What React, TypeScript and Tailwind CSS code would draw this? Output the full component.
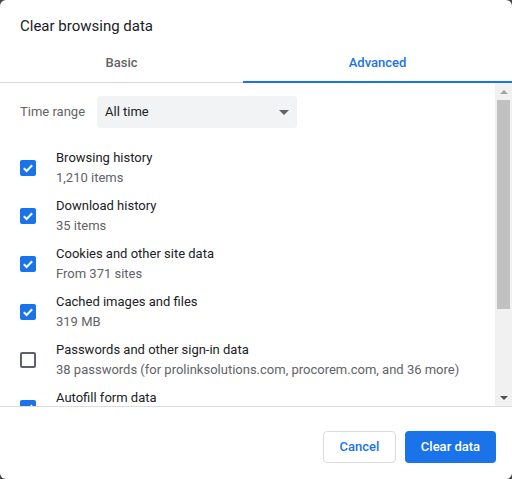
import React from 'react';

interface DataItem {
  title: string;
  detail?: string;
  checked: boolean;
}

const items: DataItem[] = [
  { title: 'Browsing history', detail: '1,210 items', checked: true },
  { title: 'Download history', detail: '35 items', checked: true },
  { title: 'Cookies and other site data', detail: 'From 371 sites', checked: true },
  { title: 'Cached images and files', detail: '319 MB', checked: true },
  {
    title: 'Passwords and other sign-in data',
    detail: '38 passwords (for prolinksolutions.com, procorem.com, and 36 more)',
    checked: false,
  },
  { title: 'Autofill form data', checked: true },
];

function Checkbox({ checked }: { checked: boolean }) {
  if (!checked) {
    return <div className="h-4 w-4 shrink-0 rounded-[2px] border-2 border-[#5f6368]" />;
  }
  return (
    <div className="flex h-4 w-4 shrink-0 items-center justify-center rounded-[2px] bg-[#1a73e8]">
      <svg viewBox="0 0 16 16" className="h-4 w-4">
        <path d="M3.8 8.2 L6.6 11 L12.2 5.2" fill="none" stroke="white" strokeWidth="2" />
      </svg>
    </div>
  );
}

function Scrollbar() {
  return (
    <div className="flex w-[17px] shrink-0 flex-col bg-[#f1f1f1]">
      <div className="flex h-[17px] items-center justify-center">
        <svg viewBox="0 0 8 4" className="h-[4px] w-[8px]">
          <path d="M0 4 L4 0 L8 4 Z" fill="#a3a3a3" />
        </svg>
      </div>
      <div className="mx-[2px] h-[209px] bg-[#c1c1c1]" />
      <div className="flex-1" />
      <div className="flex h-[17px] items-center justify-center">
        <svg viewBox="0 0 8 4" className="h-[4px] w-[8px]">
          <path d="M0 0 L8 0 L4 4 Z" fill="#505050" />
        </svg>
      </div>
    </div>
  );
}

export default function App() {
  return (
    <div className="h-[479px] w-[512px] bg-[#454545]" style={{ fontFamily: 'Roboto, "Liberation Sans", sans-serif' }}>
      <div className="flex h-full w-full flex-col overflow-hidden rounded-[6px] bg-white">
        {/* Title */}
        <div className="flex h-[52px] shrink-0 items-center px-5 pt-px text-[15px] text-[#202124]">
          Clear browsing data
        </div>

        {/* Tabs */}
        <div className="flex shrink-0 items-start border-b border-[#dadce0]">
          <div className="flex h-[30px] w-[243px] shrink-0 justify-center pt-px text-[13px] leading-[20px] font-medium text-[#5f6368]">
            Basic
          </div>
          <div className="mb-[-1px] flex h-[31px] flex-1 justify-center border-b-2 border-[#1a73e8] pt-px text-[13px] leading-[20px] font-medium text-[#1a73e8]">
            Advanced
          </div>
        </div>

        {/* Scrollable content */}
        <div className="flex h-[323px] shrink-0">
          <div className="flex-1 overflow-hidden">
            <div className="mt-[13px] flex items-center px-5">
              <span className="w-[77px] text-[13px] text-[#5f6368]">Time range</span>
              <div className="flex h-[32px] w-[200px] items-center justify-between rounded-[4px] bg-[#f1f3f4] pr-[8px] pl-[8px] text-[13px] text-[#202124]">
                <span>All time</span>
                <svg viewBox="0 0 10 5" className="h-[5px] w-[10px]">
                  <path d="M0 0 L10 0 L5 5 Z" fill="#5f6368" />
                </svg>
              </div>
            </div>
            <div className="mt-[16px]">
              {items.map((item) => (
                <div key={item.title} className="flex h-[48px] items-center px-5">
                  <Checkbox checked={item.checked} />
                  <div className="ml-5 flex h-[40px] flex-col text-[13px] leading-[20px]">
                    <span className="text-[#202124]">{item.title}</span>
                    {item.detail && <span className="text-[#5f6368]">{item.detail}</span>}
                  </div>
                </div>
              ))}
            </div>
          </div>
          <Scrollbar />
        </div>

        {/* Footer */}
        <div className="flex flex-1 items-start justify-end gap-[9px] border-t border-[#dadce0] pt-6 pr-4">
          <button className="h-[32px] w-[73px] rounded-[4px] border border-[#dadce0] bg-white text-[13px] font-medium text-[#1a73e8]">
            Cancel
          </button>
          <button className="h-[32px] w-[91px] rounded-[4px] bg-[#1a73e8] text-[13px] font-medium text-white">
            Clear data
          </button>
        </div>
      </div>
    </div>
  );
}
